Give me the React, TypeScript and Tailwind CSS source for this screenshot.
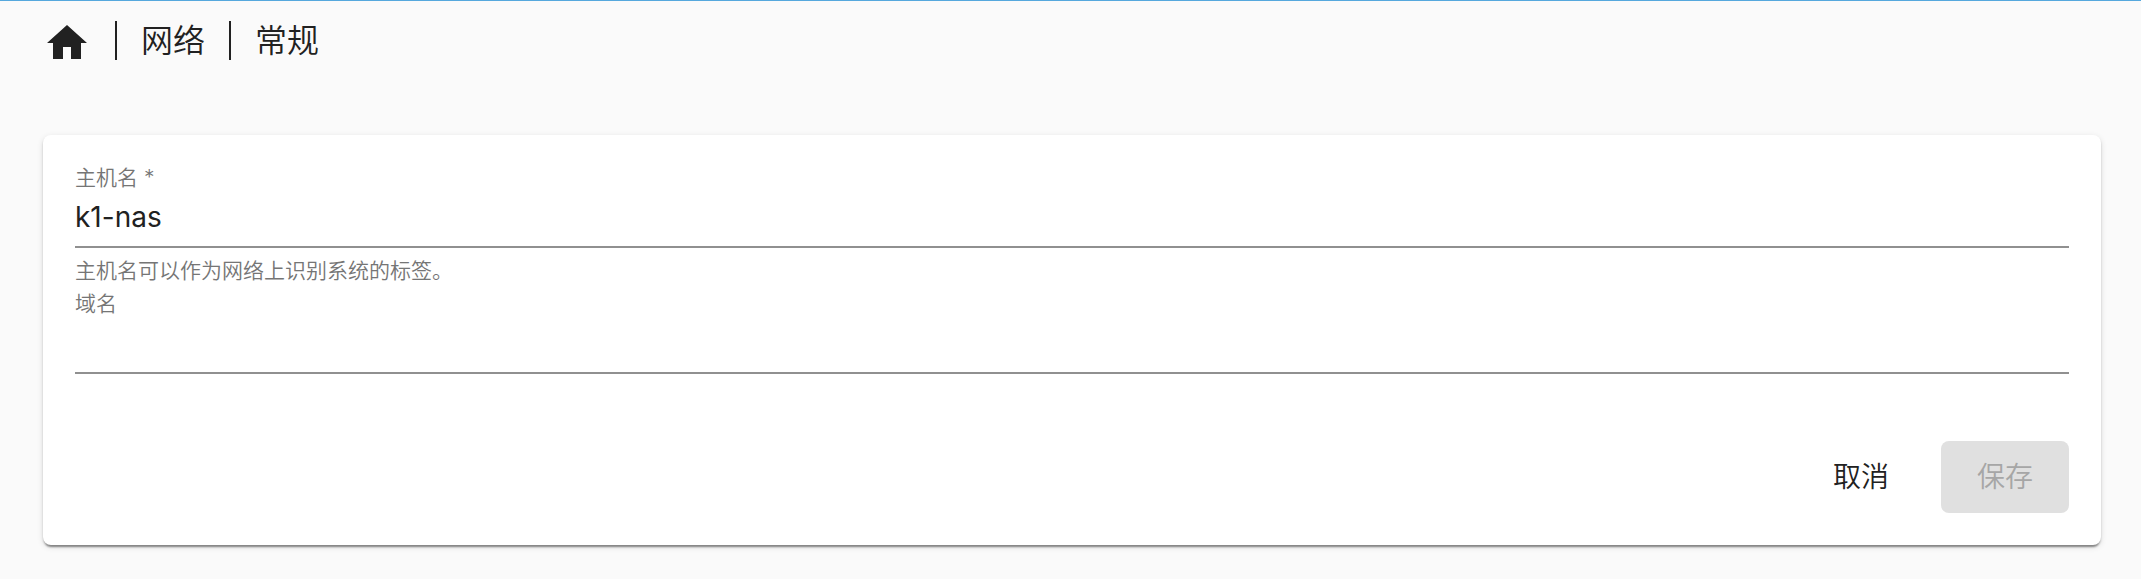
import React from "react";

function HomeIcon() {
  return (
    <svg viewBox="0 0 24 24" className="block size-12 shrink-0 fill-[#212121]" aria-hidden="true">
      <path d="M10 20v-6h4v6h5v-8h3L12 3 2 12h3v8z" />
    </svg>
  );
}

function Crumb({ children }: { children: React.ReactNode }) {
  return (
    <li className="h-[39px] border-l-2 border-[#212121] px-6 text-[32px] leading-[39px] text-[#212121]">
      {children}
    </li>
  );
}

export default function App() {
  return (
    <div className="flex h-[579px] w-full flex-col border-t border-[#55a8dd] bg-[#fafafa] font-['Inter','Noto_Sans_CJK_SC',sans-serif] font-[350] text-[#212121]">
      <nav className="flex h-[134px] shrink-0 items-start pt-5 pl-[43px]">
        <a className="-mt-0.5 mr-6">
          <HomeIcon />
        </a>
        <ol className="flex">
          <Crumb>网络</Crumb>
          <Crumb>常规</Crumb>
        </ol>
      </nav>
      <form className="mr-10 ml-[43px] flex h-[410px] shrink-0 flex-col rounded-lg bg-white px-8 pt-7 shadow-[0_4px_2px_-2px_rgba(0,0,0,0.3),0_2px_2px_0_rgba(0,0,0,0.18),0_2px_6px_0_rgba(0,0,0,0.12)]">
        <div className="flex h-[85px] shrink-0 flex-col border-b-2 border-[#909090]">
          <label className="h-[30px] text-[21px] leading-[30px] text-[#757575]">主机名 *</label>
          <div className="mt-[7px] text-[28px] leading-[34px] font-[375] [font-kerning:none]">k1-nas</div>
        </div>
        <p className="mt-[7px] h-[34px] text-[21px] leading-[32px] text-[#757575]">
          主机名可以作为网络上识别系统的标签。
        </p>
        <div className="flex h-[85px] shrink-0 flex-col border-b-2 border-[#909090]">
          <label className="h-[30px] text-[21px] leading-[30px] text-[#757575]">域名</label>
        </div>
        <div className="mt-[67px] flex justify-end gap-4">
          <button type="button" className="h-[72px] w-32 rounded-lg text-[28px] leading-[72px]">
            取消
          </button>
          <button
            type="button"
            disabled
            className="h-[72px] w-32 rounded-lg bg-[#e0e0e0] text-[28px] leading-[72px] text-[#a6a6a6]"
          >
            保存
          </button>
        </div>
      </form>
    </div>
  );
}
